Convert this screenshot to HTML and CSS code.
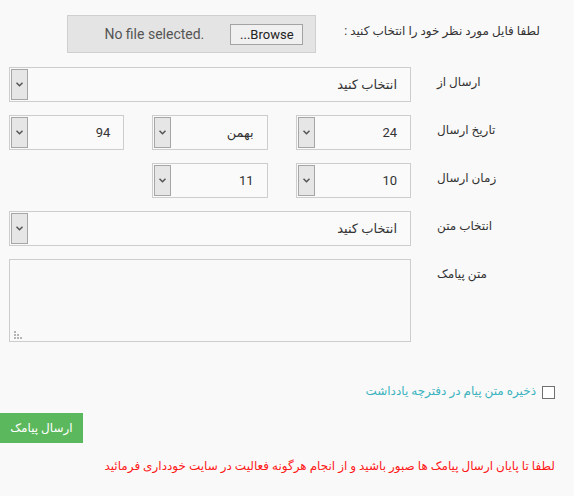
FILE: index.html
```html
<!DOCTYPE html>
<html lang="fa" dir="rtl">
<head>
  <meta charset="UTF-8" />
  <meta name="viewport" content="width=device-width, initial-scale=1.0" />
  <title>ارسال پیامک</title>
  <link rel="stylesheet" href="styles.css">
</head>
<body>
  <form class="sms-form">
    <div class="file-row">
      <label class="file-label">لطفا فایل مورد نظر خود را انتخاب کنید :</label>
      <div class="file-box">
        <span class="file-btn" dir="ltr">...Browse</span>
        <span class="file-name" dir="ltr">No file selected.</span>
      </div>
    </div>

    <div class="row">
      <label class="row-label">ارسال از</label>
      <div class="field">
        <div class="select">
          <span class="select-value">انتخاب کنید</span>
          <span class="select-arrow"><svg width="7" height="5" viewBox="0 0 7 5"><path d="M0.5 0.8 L3.5 3.8 L6.5 0.8" fill="none" stroke="#555" stroke-width="1.5"/></svg></span>
        </div>
      </div>
    </div>

    <div class="row">
      <label class="row-label">تاریخ ارسال</label>
      <div class="field triple">
        <div class="select">
          <span class="select-value">24</span>
          <span class="select-arrow"><svg width="7" height="5" viewBox="0 0 7 5"><path d="M0.5 0.8 L3.5 3.8 L6.5 0.8" fill="none" stroke="#555" stroke-width="1.5"/></svg></span>
        </div>
        <div class="select">
          <span class="select-value">بهمن</span>
          <span class="select-arrow"><svg width="7" height="5" viewBox="0 0 7 5"><path d="M0.5 0.8 L3.5 3.8 L6.5 0.8" fill="none" stroke="#555" stroke-width="1.5"/></svg></span>
        </div>
        <div class="select">
          <span class="select-value">94</span>
          <span class="select-arrow"><svg width="7" height="5" viewBox="0 0 7 5"><path d="M0.5 0.8 L3.5 3.8 L6.5 0.8" fill="none" stroke="#555" stroke-width="1.5"/></svg></span>
        </div>
      </div>
    </div>

    <div class="row">
      <label class="row-label">زمان ارسال</label>
      <div class="field triple">
        <div class="select">
          <span class="select-value">10</span>
          <span class="select-arrow"><svg width="7" height="5" viewBox="0 0 7 5"><path d="M0.5 0.8 L3.5 3.8 L6.5 0.8" fill="none" stroke="#555" stroke-width="1.5"/></svg></span>
        </div>
        <div class="select">
          <span class="select-value">11</span>
          <span class="select-arrow"><svg width="7" height="5" viewBox="0 0 7 5"><path d="M0.5 0.8 L3.5 3.8 L6.5 0.8" fill="none" stroke="#555" stroke-width="1.5"/></svg></span>
        </div>
      </div>
    </div>

    <div class="row">
      <label class="row-label">انتخاب متن</label>
      <div class="field">
        <div class="select">
          <span class="select-value">انتخاب کنید</span>
          <span class="select-arrow"><svg width="7" height="5" viewBox="0 0 7 5"><path d="M0.5 0.8 L3.5 3.8 L6.5 0.8" fill="none" stroke="#555" stroke-width="1.5"/></svg></span>
        </div>
      </div>
    </div>

    <div class="row">
      <label class="row-label">متن پیامک</label>
      <div class="field">
        <div class="message">
          <textarea class="message-input"></textarea>
          <!-- resize grip -->
          <svg class="grip" width="8" height="8" viewBox="0 0 8 8" fill="#b5b5b5">
            <rect x="0" y="0" width="2" height="2"/>
            <rect x="0" y="3" width="2" height="2"/>
            <rect x="3" y="3" width="2" height="2"/>
            <rect x="0" y="6" width="2" height="2"/>
            <rect x="3" y="6" width="2" height="2"/>
            <rect x="6" y="6" width="2" height="2"/>
          </svg>
        </div>
      </div>
    </div>

    <label class="save-row">
      <span class="checkbox"></span>
      <span class="save-text">ذخیره متن پیام در دفترچه یادداشت</span>
    </label>

    <div class="submit-row">
      <button type="submit" class="btn-send">ارسال پیامک</button>
    </div>

    <p class="warning">لطفا تا پایان ارسال پیامک ها صبور باشید و از انجام هرگونه فعالیت در سایت خودداری فرمائید</p>
  </form>
</body>
</html>
```

FILE: styles.css
```css
body {
  margin: 0;
  background-color: #f9f9f9;
  font-family: Roboto, "DejaVu Sans", sans-serif;
  font-size: 13px;
  color: #333;
}

.sms-form {
  direction: rtl;
  padding-top: 15px;
}

/* file picker */
.file-row {
  display: flex;
  align-items: flex-start;
  padding-right: 34px;
  margin-bottom: 14px;
}

.file-label {
  padding-top: 9px;
  font-size: 12px;
  color: #333;
}

.file-box {
  display: flex;
  align-items: center;
  width: 249px;
  height: 38px;
  margin-right: 28px;
  box-sizing: border-box;
  background-color: #e4e4e4;
  border: 1px solid #cfcfcf;
}

.file-btn {
  margin-right: 12px;
  width: 73px;
  height: 21px;
  line-height: 19px;
  box-sizing: border-box;
  text-align: center;
  background-color: #f0f0f0;
  border: 1px solid #a3a3a3;
  color: #222;
  font-size: 13px;
}

.file-name {
  margin-right: 26px;
  color: #555;
  font-size: 14px;
}

/* label + control rows */
.row {
  display: flex;
  align-items: flex-start;
  margin-bottom: 13px;
}

.row-label {
  width: 137px;
  padding-top: 8px;
  text-align: left;
  font-size: 12px;
  color: #333;
}

.field {
  width: 402px;
  margin-right: 26px;
}

.field.triple {
  display: grid;
  grid-template-columns: repeat(3, 1fr);
  column-gap: 28px;
}

.select {
  display: flex;
  height: 35px;
  box-sizing: border-box;
  border: 1px solid #cdcdcd;
  background-color: #fafafa;
}

.select-value {
  flex: 1;
  padding-right: 13px;
  line-height: 33px;
  font-size: 13px;
  color: #333;
}

.select-arrow {
  display: flex;
  align-items: center;
  justify-content: center;
  width: 17px;
  margin: 1px;
  box-sizing: border-box;
  border: 1px solid #a6a6a6;
  background-color: #e6e6e6;
}

.message {
  position: relative;
  height: 83px;
}

.message-input {
  display: block;
  width: 100%;
  height: 100%;
  box-sizing: border-box;
  border: 1px solid #cdcdcd;
  background-color: #f9f9f9;
  resize: none;
  font: inherit;
}

.grip {
  position: absolute;
  left: 5px;
  bottom: 3px;
}

/* save checkbox */
.save-row {
  display: flex;
  align-items: center;
  padding-right: 19px;
  margin-top: 44px;
}

.checkbox {
  width: 13px;
  height: 13px;
  box-sizing: border-box;
  border: 1.5px solid #707070;
  background-color: #fff;
}

.save-text {
  margin-right: 6px;
  margin-top: -4px;
  color: #3cb4c0;
  font-size: 12px;
}

.submit-row {
  display: flex;
  justify-content: flex-end;
  margin-top: 14px;
}

.btn-send {
  width: 83px;
  height: 30px;
  padding: 0;
  border: none;
  background-color: #5cb85c;
  color: #fff;
  font-family: inherit;
  font-size: 12px;
}

.warning {
  margin: 16px 19px 0 0;
  color: #ff1a1a;
  font-size: 12px;
}
```
